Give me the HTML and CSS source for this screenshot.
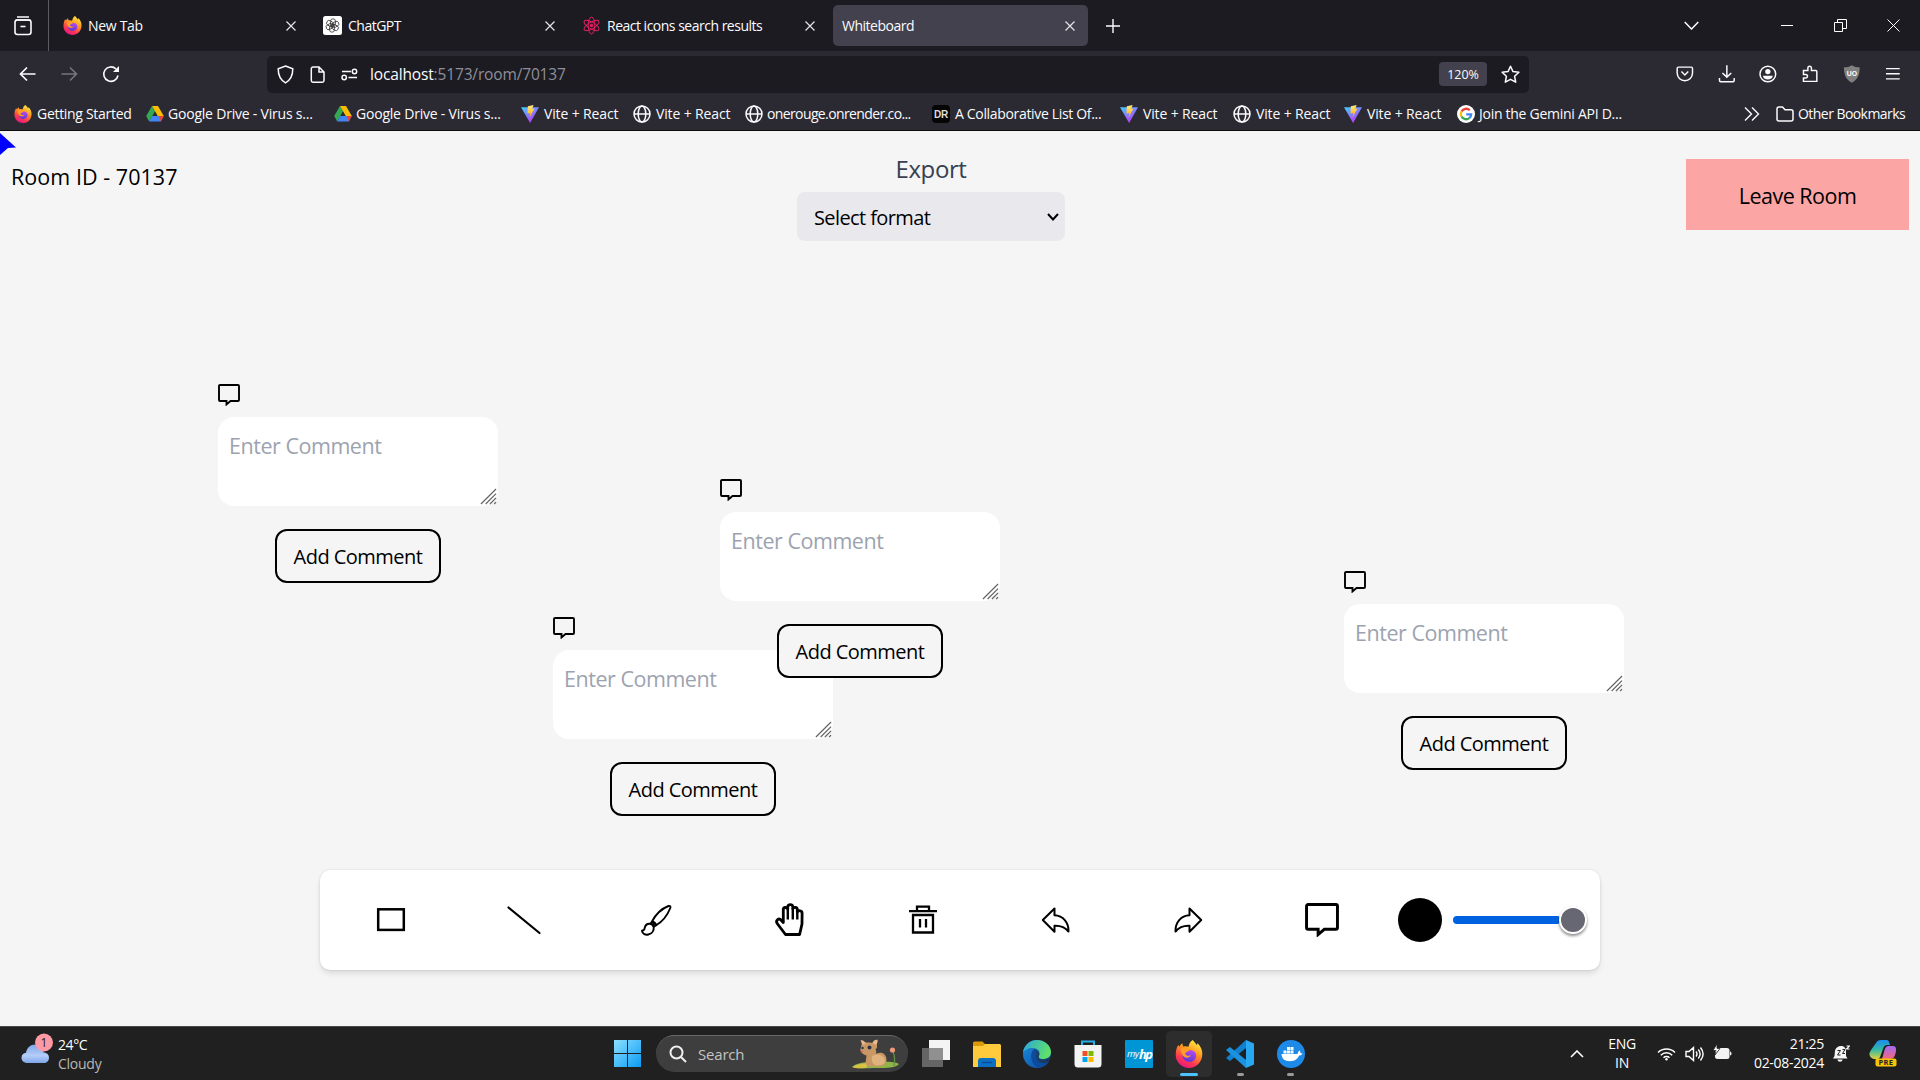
FILE: index.html
```html
<!DOCTYPE html>
<html lang="en">
<head>
<meta charset="utf-8">
<title>Whiteboard</title>
<link rel="stylesheet" href="styles.css">
</head>
<body>
<svg class="defs" aria-hidden="true">
  <defs>
    <linearGradient id="fx-body" x1=".8" y1="0" x2=".3" y2="1"><stop offset="0" stop-color="#fff14a"/><stop offset=".4" stop-color="#ff9a1f"/><stop offset=".75" stop-color="#ff3750"/><stop offset="1" stop-color="#e31587"/></linearGradient>
    <linearGradient id="fx-core" x1=".6" y1="0" x2=".3" y2="1"><stop offset="0" stop-color="#b04bf0"/><stop offset="1" stop-color="#5b35d6"/></linearGradient>
    <linearGradient id="vite-a" x1="0" y1="0" x2=".6" y2="1"><stop offset="0" stop-color="#41d1ff"/><stop offset="1" stop-color="#bd34fe"/></linearGradient>
    <linearGradient id="vite-b" x1="0" y1="0" x2="0" y2="1"><stop offset="0" stop-color="#ffea83"/><stop offset="1" stop-color="#ffa800"/></linearGradient>
    <linearGradient id="win" gradientUnits="userSpaceOnUse" x1="0" y1="0" x2="27" y2="27"><stop offset="0" stop-color="#8be0ff"/><stop offset="1" stop-color="#0a9bf5"/></linearGradient>
    <linearGradient id="cloud" x1="0" y1="0" x2="0" y2="1"><stop offset="0" stop-color="#7fa6ea"/><stop offset=".6" stop-color="#b4cdf8"/><stop offset="1" stop-color="#7ea5ea"/></linearGradient>
    <linearGradient id="edge-a" x1="0" y1="0" x2="1" y2=".3"><stop offset="0" stop-color="#2aa6e0"/><stop offset="1" stop-color="#5fe06a"/></linearGradient>
    <linearGradient id="edge-b" x1="0" y1="0" x2="1" y2="1"><stop offset="0" stop-color="#1c8fe0"/><stop offset="1" stop-color="#0c469c"/></linearGradient>
    <linearGradient id="cop-a" x1="0" y1="0" x2="0" y2="1"><stop offset="0" stop-color="#1b8df0"/><stop offset=".5" stop-color="#33b9a5"/><stop offset="1" stop-color="#e5d23a"/></linearGradient>
    <linearGradient id="cop-b" x1="0" y1="0" x2="0" y2="1"><stop offset="0" stop-color="#a26bf5"/><stop offset="1" stop-color="#f5677b"/></linearGradient>
    <symbol id="firefox" viewBox="0 0 20 20">
      <path fill="url(#fx-body)" d="M12.6 0c1 1.300 2.300 2.200 2.900 3.600.5-.4.6-.9.6-1.400C18.500 4.600 19.700 7.500 19.500 10.500 19.200 16 15 20 10 20S.5 16 .5 10.800C.5 8 1 5.600 2.300 3.500l.9 1.300C3.800 3.600 4.400 3 5.200 2.400l.6 2.200c1.500-.4 2.700-.2 3.800.3C10 2.800 11 1 12.600 0z"/>
      <path fill="url(#fx-core)" d="M6.200 8.200c2 .5 2.800-.2 4.200-.8 2.500-.5 4.900 1.200 4.700 4-.2 2.500-2.200 4.300-4.800 4.300S5.300 13.700 5.300 11.500z"/>
      <path fill="#ff9d25" d="M4.200 6c2-1 4.600-.6 6 1.400-.8 1-2.300 1-2.900 2.200.2 1.600 2.600 2 4.100 1.300-1 2.100-4.400 2.500-6-.1C4.500 9 4 7.600 4.200 6z"/>
    </symbol>
    <symbol id="drive" viewBox="0 0 18 18">
      <path fill="#34a853" d="M6 1l3 5.200L3.200 16.500.2 11z"/>
      <path fill="#fbbc04" d="M6 1h6l5.800 10h-6z"/><path fill="#4285f4" d="M6.200 11h11.600l-3 5.500H3.200z"/><path fill="#ea4335" d="M12.500 11h5.300l-3 5.500z"/>
    </symbol>
    <symbol id="vite" viewBox="0 0 19 19"><path fill="url(#vite-a)" d="M0 2.300L19 2.300 9.600 19z"/><path fill="url(#vite-b)" d="M7.200 1.200L13.300 0l-1.500 4.300 2.500-.5-5.300 9.500.8-4.800-3 .6z"/></symbol>
    <symbol id="globe" viewBox="0 0 18 18"><g fill="none" stroke="#fbfbfe" stroke-width="1.500"><circle cx="9" cy="9" r="8"/><ellipse cx="9" cy="9" rx="3.800" ry="8"/><path d="M1 9h16"/></g></symbol>
    <symbol id="close" viewBox="0 0 10 10"><path d="M.5.5l9 9M9.500.5l-9 9" fill="none" stroke="#e4e4ea" stroke-width="1.200"/></symbol>
    <symbol id="bubble" viewBox="0 0 22 22"><path d="M2 1h18a1 1 0 0 1 1 1v14a1 1 0 0 1-1 1h-7.500L8.500 20.400V17H2a1 1 0 0 1-1-1V2a1 1 0 0 1 1-1z" fill="none" stroke="#000" stroke-width="1.900"/></symbol>
    <symbol id="grip" viewBox="0 0 18 18"><path d="M1 17L17 1M6 17L17 6M10.500 17L17 10.500M15 17l2-2" fill="none" stroke="#666" stroke-width="1.300"/></symbol>
  </defs>
</svg>

<header class="browser">
  <div class="tabs">
    <div class="archive"><svg width="18" height="20" viewBox="0 0 18 20" fill="none" stroke="#fbfbfe" stroke-width="1.600"><path d="M3 1h12M1.500 4h15"/><rect x="1" y="4" width="16" height="14.500" rx="2.500"/><path d="M6.500 10.500h5"/></svg></div>
    <div class="tab"><svg class="i19"><use href="#firefox"/></svg><span>New Tab</span><svg class="x"><use href="#close"/></svg></div>
    <div class="tab"><svg class="i19" viewBox="0 0 19 19"><rect width="19" height="19" rx="2.500" fill="#fff"/><g fill="none" stroke="#333" stroke-width=".8"><rect id="petal" x="7.500" y="2.800" width="5" height="7.500" rx="2.500"/><use href="#petal" transform="rotate(60 9.500 9.500)"/><use href="#petal" transform="rotate(120 9.500 9.500)"/><use href="#petal" transform="rotate(180 9.500 9.500)"/><use href="#petal" transform="rotate(240 9.500 9.500)"/><use href="#petal" transform="rotate(300 9.500 9.500)"/></g></svg><span>ChatGPT</span><svg class="x"><use href="#close"/></svg></div>
    <div class="tab"><svg class="i19" viewBox="0 0 19 19" fill="none" stroke="#e91e63"><ellipse cx="9.500" cy="9.500" rx="8.500" ry="3.300" transform="rotate(30 9.500 9.500)"/><ellipse cx="9.500" cy="9.500" rx="8.500" ry="3.300" transform="rotate(90 9.500 9.500)"/><ellipse cx="9.500" cy="9.500" rx="8.500" ry="3.300" transform="rotate(150 9.500 9.500)"/><circle cx="9.500" cy="9.500" r="1.300" fill="#e91e63"/></svg><span>React icons search results</span><svg class="x"><use href="#close"/></svg></div>
    <div class="tab active"><span>Whiteboard</span><svg class="x"><use href="#close"/></svg></div>
    <svg class="plus" width="14" height="14" viewBox="0 0 14 14"><path d="M7 0v14M0 7h14" stroke="#fbfbfe" stroke-width="1.400"/></svg>
    <div class="window-controls">
      <svg width="15" height="9" viewBox="0 0 15 9"><path d="M.7 1L7.500 8l6.800-7" fill="none" stroke="#fbfbfe" stroke-width="1.500"/></svg>
      <svg width="12" height="12" viewBox="0 0 12 12"><path d="M0 5.500h12" stroke="#fff" stroke-width="1"/></svg>
      <svg width="13" height="13" viewBox="0 0 13 13" fill="none" stroke="#fff"><path d="M.5 3.500h8v9h-8zM3.500 3.500v-3h9v9h-4"/></svg>
      <svg width="13" height="13" viewBox="0 0 13 13"><path d="M.5.5l12 12M12.500.5l-12 12" stroke="#fff" stroke-width="1"/></svg>
    </div>
  </div>

  <div class="toolbar">
    <div class="nav">
      <svg width="17" height="16" viewBox="0 0 17 16" fill="none" stroke="#fbfbfe" stroke-width="1.700"><path d="M16.500 8H1.500M8 1.500L1.500 8 8 14.500"/></svg>
      <svg width="17" height="16" viewBox="0 0 17 16" fill="none" stroke="#77767f" stroke-width="1.600"><path d="M.5 8h15M9 1.500L15.500 8 9 14.500"/></svg>
      <svg width="18" height="18" viewBox="0 0 18 18" fill="none" stroke="#fbfbfe" stroke-width="1.600"><path d="M16 10.500A7.200 7.200 0 1 1 14 4"/><path d="M17 1v6h-6z" fill="#fbfbfe" stroke="none"/></svg>
    </div>
    <div class="url">
      <svg width="17" height="19" viewBox="0 0 17 19" fill="none" stroke="#fbfbfe" stroke-width="1.500"><path d="M8.500 1l7.300 2.800c0 6.500-1.500 11-7.300 14C2.700 14.800 1.200 10.300 1.200 3.800z"/></svg>
      <svg width="15" height="17" viewBox="0 0 15 17" fill="none" stroke="#fbfbfe" stroke-width="1.500"><path d="M3 1h6l5 5v8.500a1.700 1.700 0 0 1-1.700 1.700H3a1.700 1.700 0 0 1-1.700-1.700V2.700A1.700 1.700 0 0 1 3 1zM9 1v5h5"/></svg>
      <svg width="17" height="13" viewBox="0 0 17 13" fill="none" stroke="#fbfbfe" stroke-width="1.500"><path d="M1 3.500h9M7.500 9.500H16"/><circle cx="13.500" cy="3.500" r="2.200"/><circle cx="3.200" cy="9.500" r="2.200"/></svg>
      <span class="address">localhost<span class="dim">:5173/room/70137</span></span>
      <span class="zoom">120%</span>
      <svg width="19" height="19" viewBox="0 0 19 19" fill="none" stroke="#fbfbfe" stroke-width="1.500" stroke-linejoin="round"><path d="M9.500 1.200l2.500 5.400 5.900.7-4.300 4 1.100 5.900-5.200-2.900-5.200 2.900 1.100-5.900-4.300-4 5.900-.7z"/></svg>
    </div>
    <div class="actions">
      <svg viewBox="0 0 18 18" fill="none" stroke="#fbfbfe" stroke-width="1.500"><path d="M2.500 2h13a1.300 1.300 0 0 1 1.300 1.300V8a7.800 7.800 0 0 1-15.600 0V3.300A1.300 1.300 0 0 1 2.500 2z"/><path d="M5.500 6.500L9 10l3.500-3.500"/></svg>
      <svg viewBox="0 0 18 18" fill="none" stroke="#fbfbfe" stroke-width="1.500"><path d="M9 0v12M4.500 8L9 12.200 13.500 8M1.500 13v2a2 2 0 0 0 2 2h11a2 2 0 0 0 2-2v-2"/></svg>
      <svg viewBox="0 0 18 18"><circle cx="9" cy="9" r="8" fill="none" stroke="#fbfbfe" stroke-width="1.500"/><circle cx="9" cy="6.500" r="2.700" fill="#fbfbfe"/><path d="M4 10.800h10c0 2.400-2.300 3.700-5 3.700s-5-1.300-5-3.700z" fill="#fbfbfe"/></svg>
      <svg viewBox="0 0 18 18" fill="none" stroke="#fbfbfe" stroke-width="1.500"><path d="M2.500 5.500H7V3a1.800 1.800 0 0 1 3.600 0v2.500h4.500a1 1 0 0 1 1 1V16.500H2.500v-3.500h2.300a1.800 1.800 0 0 0 0-3.600H2.500z"/></svg>
      <svg viewBox="0 0 18 18"><path d="M9 0c2.500 1.600 5 2.200 8 2.200C17 10 15 14.800 9 18 3 14.800 1 10 1 2.200 4 2.200 6.500 1.600 9 0z" fill="#808080"/><text x="9" y="11" text-anchor="middle" class="ub">UO</text></svg>
      <svg viewBox="0 0 18 18" stroke="#fbfbfe" stroke-width="1.400"><path d="M2 3.500h14M2 8.700h14M2 14h14"/></svg>
    </div>
  </div>

  <nav class="bookmarks">
    <a class="start-link"><svg><use href="#firefox"/></svg>Getting Started</a>
    <a class="drive"><svg><use href="#drive"/></svg>Google Drive - Virus s...</a>
    <a class="drive"><svg><use href="#drive"/></svg>Google Drive - Virus s...</a>
    <a><svg><use href="#vite"/></svg>Vite + React</a>
    <a><svg><use href="#globe"/></svg>Vite + React</a>
    <a class="rouge"><svg><use href="#globe"/></svg>onerouge.onrender.co...</a>
    <a class="collab"><svg viewBox="0 0 18 18"><rect width="18" height="18" rx="4" fill="#050505"/><text x="9" y="12.800" text-anchor="middle" class="or">DR</text></svg>A Collaborative List Of...</a>
    <a><svg><use href="#vite"/></svg>Vite + React</a>
    <a><svg><use href="#globe"/></svg>Vite + React</a>
    <a><svg><use href="#vite"/></svg>Vite + React</a>
    <a class="gemini"><svg viewBox="0 0 18 18"><circle cx="9" cy="9" r="9" fill="#fff"/><g fill="none" stroke-width="2.300"><path d="M12.800 5.300A5.200 5.200 0 0 0 4.500 6.500" stroke="#ea4335"/><path d="M4.500 6.500a5.200 5.200 0 0 0 0 5" stroke="#fbbc04"/><path d="M4.500 11.500a5.200 5.200 0 0 0 7.800 1.600" stroke="#34a853"/><path d="M12.300 13.100A5 5 0 0 0 14.200 9.300H9.200" stroke="#4285f4"/></g></svg>Join the Gemini API D...</a>
    <a><svg viewBox="0 0 18 18" fill="none" stroke="#fbfbfe" stroke-width="1.400"><path d="M2 2.500L8.500 9 2 15.500M9 2.500L15.500 9 9 15.500"/></svg></a>
    <a class="other"><svg viewBox="0 0 18 18" fill="none" stroke="#fbfbfe" stroke-width="1.500"><path d="M1 4a2 2 0 0 1 2-2h3.500L9 4.700h6a2 2 0 0 1 2 2V14a2 2 0 0 1-2 2H3a2 2 0 0 1-2-2z"/></svg>Other Bookmarks</a>
  </nav>
</header>

<main class="board">
  <svg class="cursor" width="16" height="22" viewBox="0 0 16 22"><path d="M0 0l16 14.500-8 .6L0 22z" fill="#00f"/></svg>
  <div class="board-head">
    <div class="room">Room ID - 70137</div>
    <div class="export">
      <label>Export</label>
      <div class="select"><span>Select format</span><svg width="12" height="8" viewBox="0 0 12 8"><path d="M1 1l5 5.500L11 1" fill="none" stroke="#000" stroke-width="2"/></svg></div>
    </div>
    <button class="leave">Leave Room</button>
  </div>

  <section class="comment c1"><svg class="pin"><use href="#bubble"/></svg><div class="field"><span>Enter Comment</span><svg class="grip"><use href="#grip"/></svg></div><button>Add Comment</button></section>
  <section class="comment c2"><svg class="pin"><use href="#bubble"/></svg><div class="field"><span>Enter Comment</span><svg class="grip"><use href="#grip"/></svg></div><button>Add Comment</button></section>
  <section class="comment c3"><svg class="pin"><use href="#bubble"/></svg><div class="field"><span>Enter Comment</span><svg class="grip"><use href="#grip"/></svg></div><button>Add Comment</button></section>
  <section class="comment c4"><svg class="pin"><use href="#bubble"/></svg><div class="field"><span>Enter Comment</span><svg class="grip"><use href="#grip"/></svg></div><button>Add Comment</button></section>

  <div class="tools">
    <div class="tool"><svg width="34" height="34" viewBox="0 0 34 34"><rect x="4.200" y="6.300" width="25.600" height="20.600" fill="none" stroke="#000" stroke-width="2.500"/></svg></div>
    <div class="tool"><svg width="34" height="34" viewBox="0 0 34 34"><path d="M1.500 4.500L32.500 30" stroke="#000" stroke-width="2.200" stroke-linecap="round"/></svg></div>
    <div class="tool"><svg width="34" height="34" viewBox="1 0 34 34" fill="none" stroke="#000" stroke-width="1.900" stroke-linejoin="round"><path d="M13 18.500C17 11 23 5.500 29.500 3c1.700-.4 2.400.5 1.800 2C28.500 12 23.500 18.500 17.200 22.300z"/><path d="M13 18.500c2.300.3 3.700 1.700 4.200 3.800l-2.500 1.500"/><path d="M13 18.500l-1.600 2.300c2 .4 3 1.400 3.300 3"/><path d="M11.400 20.800c-3.400-.5-5.200 1.600-5.700 4.200-.2 1.700-.9 2.500-2.700 2.800.4 3.300 3.500 4.300 6.400 3.700 3.600-.8 5.700-4 5.300-7.700-.4-1.700-1.500-2.800-3.300-3z"/></svg></div>
    <div class="tool"><svg width="34" height="36" viewBox="0 1 34 36" fill="none" stroke="#000" stroke-width="2.800" stroke-linejoin="round"><path d="M12.500 33.500L4.200 22.500C2.200 19 6 16.500 8.200 19.200L10.300 21.500V8.500c0-2.600 4-2.600 4.500-.4V5.500c.4-2.600 4.600-2.600 5 0v2.300c.6-2.200 4.500-2 4.500.6v2.500c.8-1.800 5-1.700 4.800 1.500L29 23l-2.400 10.500z"/><path d="M14.800 7.500v11M19.800 7v11.500M24.300 10v8.500" stroke-width="2.400"/></svg></div>
    <div class="tool"><svg width="34" height="34" viewBox="0 .5 34 34" fill="none" stroke="#000" stroke-width="2.300"><path d="M3 8.700h28M11 8V4.200h12V8M7 12.500h20v17.500H7zM14 16.500v8.500M20 16.500v8.500"/></svg></div>
    <div class="tool"><svg width="34" height="34" viewBox="0 0 34 34" fill="none" stroke="#000" stroke-width="2" stroke-linejoin="round"><path d="M15.500 5.500v6.800c8.500.3 14.300 7 14 16.200-3.500-4.200-8.300-6-14-5.700v6L3.800 17z"/></svg></div>
    <div class="tool"><svg width="34" height="34" viewBox="1 0 34 34" fill="none" stroke="#000" stroke-width="2" stroke-linejoin="round"><path d="M18.500 5.500v6.800C10 12.600 4.200 19.300 4.500 28.500c3.500-4.200 8.300-6 14-5.700v6L30.200 17z"/></svg></div>
    <div class="tool"><svg width="34" height="34" viewBox="0 0 22 22"><use href="#bubble" width="22" height="22"/></svg></div>
    <div class="color"></div>
    <div class="slider"><div class="track"></div><div class="thumb"></div></div>
  </div>
</main>

<footer class="taskbar">
  <div class="weather">
    <svg width="34" height="34" viewBox="0 0 34 34"><path d="M6.500 30C2.500 30 .5 27.500.5 24.700c0-2.700 2-4.700 4.500-5C6 14.500 9.500 11.500 14 11.500c5 0 8 3.500 8.500 8 3.500 0 5.500 2.300 5.500 5.200 0 3-2 5.300-5.500 5.300z" fill="url(#cloud)"/><circle cx="23" cy="9.500" r="9" fill="#ff99a4"/><text x="23" y="14" text-anchor="middle" class="badge">1</text></svg>
    <div class="weather-text"><span>24°C</span><span class="muted">Cloudy</span></div>
  </div>
  <div class="apps">
    <svg class="start" width="27" height="27" viewBox="0 0 27 27"><path d="M0 0h13v13H0zM14 0h13v13H14zM0 14h13v13H0zM14 14h13v13H14z" fill="url(#win)"/></svg>
    <div class="search">
      <svg width="18" height="18" viewBox="0 0 18 18" fill="none" stroke="#f0f0f0" stroke-width="2"><circle cx="7.500" cy="7.500" r="6"/><path d="M12 12l5 5"/></svg>
      <span>Search</span>
      <svg class="critter" width="48" height="30" viewBox="0 0 48 30"><path d="M0 28c4-4 12-5 22-5s20-1 25 2c-3 4-12 4-22 4s-20 1-25-1z" fill="#8fb548"/><path d="M0 28c6-3 12-4 18-4l-4 5c-6 .5-11 .5-14-1z" fill="#d8c243"/><path d="M10 4c1-1 3-1.500 5-.5 2 0 4 0 5 .5 2-1 4-1.500 5-.5v5l-1.500 2c1 1.500 1 3 .5 4.500 5-3 10.500-.5 10.500 6 0 5-4 6.500-9 6.500H17c-3-.5-4-3-3-7l.5-4C10 15 8 13 8.500 10z" fill="#c99763"/><path d="M20 17c5-3.500 13-1 13 5 0 3.500-4 4.500-9 4.500-4-1.500-5-6-4-9.500z" fill="#dfb27e"/><path d="M8.500 1.500c2.500-.8 4.500 1 5 3.500l-3 1zM25.500.8c-2.500-.5-4.500 1-5 3.500l3.500 1.500c1.500-1.500 2-3.500 1.500-5z" fill="#e9b78c"/><circle cx="17.500" cy="8.500" r="2" fill="#26344e"/><circle cx="10.500" cy="9" r="1.200" fill="#26344e"/><path d="M8 12.500l2.500-.8v1.800z" fill="#e5484d"/><path d="M41 13c2 4 2 8 1 14" stroke="#629044" fill="none" stroke-width="1.300"/><circle cx="40.500" cy="11" r="2.600" fill="#ee9a77"/></svg>
    </div>
    <div class="app"><svg width="28" height="28" viewBox="0 0 28 28"><path d="M7 0h21v20H7z" fill="#f4f4f4"/><path d="M0 8h21v19H0z" fill="#777" fill-opacity=".8"/></svg></div>
    <div class="app"><svg width="28" height="28" viewBox="0 0 28 28"><path d="M0 3a1.500 1.500 0 0 1 1.500-1.500h8L12 4v5H0z" fill="#dc9a09"/><path d="M0 6h10l2-2h14.500A1.500 1.500 0 0 1 28 5.500V27H0z" fill="#ffcb3d"/><path d="M5 27v-6a3 3 0 0 1 3-3h12a3 3 0 0 1 3 3v6z" fill="#0b6fc4"/><path d="M9 22.500h10" stroke="#0a4d92" stroke-width="1.300"/></svg></div>
    <div class="app"><svg width="28" height="28" viewBox="0 0 28 28"><circle cx="14" cy="14" r="14" fill="url(#edge-b)"/><path d="M0 13C1 4 8 0 14 0c8 0 14 6 14 12 0 5-4 7-8 7-3 0-5-1-4-3 2-4-1-8-6-8-5 0-9 2-10 5z" fill="url(#edge-a)"/><path d="M28 15c-1.500 3-4.500 4.500-8 4.500-3 0-5-1.500-4-3.500 1-3-1-6.500-5-7-3 5-2 12 4 15.500 5 1.500 9-.5 12-4 .8-2 1-3.500 1-5.500z" fill="#202020" fill-opacity=".55"/><path d="M10 10c-3 4-3 12 4 17.500 5 .5 9-2 11.500-5.500-6 2.500-11.500 0-12.500-4.500-.5-2.500 1-5-.5-7z" fill="#0d4b9e"/></svg></div>
    <div class="app"><svg width="28" height="28" viewBox="0 0 28 28"><path d="M8 6V1.500h12V6" fill="none" stroke="#26aee8" stroke-width="2"/><path d="M.5 5h27v19a3.500 3.500 0 0 1-3.500 3.500H4A3.500 3.500 0 0 1 .5 24z" fill="#f3f3f3"/><path d="M8.500 11h5v5h-5z" fill="#f25022"/><path d="M14.500 11h5v5h-5z" fill="#7fba00"/><path d="M8.500 17h5v5h-5z" fill="#00a4ef"/><path d="M14.500 17h5v5h-5z" fill="#ffb900"/></svg></div>
    <div class="app"><svg width="28" height="28" viewBox="0 0 28 28"><rect width="28" height="28" rx="1" fill="#0096d6"/><text x="2" y="17" class="my">my</text><text x="14" y="18.500" class="hp">hp</text></svg></div>
    <div class="app current"><svg width="28" height="28"><use href="#firefox"/></svg></div>
    <div class="app running"><svg width="28" height="28" viewBox="0 0 28 28"><path d="M20 0l8 3.500v21L20 28z" fill="#29a8f2"/><path d="M20 0v8L4 21l-4-3z" fill="#1080cf"/><path d="M20 28v-8L4 7 0 10z" fill="#1b91df"/></svg></div>
    <div class="app running"><svg width="28" height="28" viewBox="0 0 28 28"><circle cx="14" cy="14" r="14" fill="#1d8ae8"/><path d="M4.500 14h16c.5-2 1-3 2-3.500.8.800 1 1.700.9 2.700l2.100.3c-.8 1.500-1.800 2-3.500 2-1.500 4-4.500 5.700-9 5.700-5 0-8.300-2-8.500-7.200z" fill="#fff"/><path d="M6.500 10.500h3v3h-3zM10 10.500h3v3h-3zM13.500 10.500h3v3h-3zM10 7h3v3h-3zM13.500 7h3v3h-3z" fill="#fff"/></svg></div>
  </div>
  <div class="tray">
    <svg class="up" width="14" height="8" viewBox="0 0 14 8"><path d="M1 7l6-6 6 6" fill="none" stroke="#fff" stroke-width="1.600"/></svg>
    <div class="lang"><span>ENG</span><span>IN</span></div>
    <svg class="wifi" width="19" height="14" viewBox="0 0 19 14" fill="none" stroke="#fff" stroke-width="1.500"><path d="M1 5.500a12 12 0 0 1 17 0M3.800 8.200a8 8 0 0 1 11.400 0M6.500 10.800a4.200 4.200 0 0 1 6 0"/><circle cx="9.500" cy="12.300" r="1.200" fill="#fff" stroke="none"/></svg>
    <svg class="sound" width="19" height="16" viewBox="0 0 19 16" fill="none" stroke="#fff" stroke-width="1.400"><path d="M1 5.500h3L8.500 1.500v13L4 10.500H1zM11 5.500c1.200 1.500 1.200 3.500 0 5M13.300 3.500c2.200 2.700 2.200 6.300 0 9M15.500 1.500c3.200 4 3.200 9 0 13"/></svg>
    <svg class="battery" width="19" height="16" viewBox="0 0 19 16"><rect x="2" y="4" width="14.500" height="11" rx="2.500" fill="#f2f2f2"/><path d="M17 7.500c2 0 2 4 0 4z" fill="#f2f2f2"/><path d="M4 0L0 6.500h3L2 11l5-6.500H4z" fill="#fff" stroke="#202020" stroke-width=".8"/></svg>
    <div class="clock"><span>21:25</span><span>02-08-2024</span></div>
    <svg class="bell" width="17" height="18" viewBox="0 0 17 18"><path d="M2 5.500C3 2.500 5 1 8 1s5 2 5 5v5l1.500 2.500H0L1.500 11z" fill="#f5f5f5"/><path d="M4.500 14.500h5c0 3-5 3-5 0z" fill="#f5f5f5"/><path d="M4.500 5.500h3l-3 4.500h3M9.500 4.500h2.500l-2.500 4h2.500" fill="none" stroke="#202020"/><path d="M13.500 1h3l-3 3h3" fill="none" stroke="#fff" stroke-width="1.100"/></svg>
    <svg class="copilot" width="28" height="28" viewBox="0 0 28 28"><path d="M7 3C8 1 9.500 0 12 0h5c3 0 3 2 4 5h-3c-2 0-3 1-4 4l-3 8c-1 3-7 3-9.500 0C-.5 14 .5 13 2 10z" fill="url(#cop-a)"/><path d="M15 12c1-4 2-6 5-6h4c4 0 3.500 5 2 9-1 3-3 4-6 4h-7z" fill="url(#cop-b)"/><rect x="6.500" y="18.500" width="21" height="8" rx="2" fill="#fbc307"/><text x="17" y="25.300" text-anchor="middle" class="pre">PRE</text></svg>
  </div>
</footer>
</body>
</html>
```
FILE: styles.css
```css
* { box-sizing: border-box; }
body {
  margin: 0;
  width: 1920px;
  height: 1080px;
  overflow: hidden;
  display: flex;
  flex-direction: column;
  font-family: "Open Sans", "Noto Sans", sans-serif;
  color: #000;
}
svg { display: block; flex: none; }
button { font-family: inherit; color: inherit; padding: 0; }
.defs { position: absolute; width: 0; height: 0; }

/* Browser chrome */
.browser { height: 131px; background: #2b2a33; color: #fbfbfe; font-size: 14px; border-bottom: 1px solid #0c0c0d; }
.tabs { display: flex; align-items: center; height: 51px; background: #1c1b22; }
.archive { width: 49px; height: 51px; padding: 16px 0 0 14px; border-right: 1px solid #5b5b66; }
.tab { display: flex; align-items: center; width: 260px; height: 41px; padding: 0 13px 0 14px; letter-spacing: -.5px; white-space: nowrap; }
.tab span { flex: 1; margin-left: 6px; }
.tab:nth-child(2) { letter-spacing: -.7px; letter-spacing: -.3px; }
.tab:nth-child(3) { width: 259px; }
.tab.active { width: 255px; margin-left: 5px; padding: 0 13px 0 3px; border-radius: 5px; background: #42414d; }
.i19 { width: 19px; height: 19px; }
.x { width: 10px; height: 10px; }
.plus { margin-left: 18px; }
.window-controls { display: flex; align-items: center; margin-left: auto; margin-right: 20px; }
.window-controls svg:nth-child(2) { margin-left: 82px; }
.window-controls svg:nth-child(3) { margin-left: 41px; }
.window-controls svg:nth-child(4) { margin-left: 40px; }

.toolbar { display: flex; align-items: center; height: 45px; }
.nav { display: flex; align-items: center; gap: 24.500px; width: 267px; padding-left: 19px; }
.url { display: flex; align-items: center; width: 1262px; height: 37px; margin-top: 1px; padding: 0 9px 0 10px; border-radius: 5px; background: #1c1b22; }
.url svg:nth-child(2) { margin-left: 16px; }
.url svg:nth-child(3) { margin-left: 16px; }
.address { flex: 1; margin-left: 12px; font-size: 15.500px; letter-spacing: -.15px; }
.dim { color: #8f8f98; }
.zoom { width: 48px; height: 24px; margin-right: 14px; border-radius: 4px; background: #42414d; font-size: 12.500px; line-height: 25px; text-align: center; letter-spacing: -.1px; }
.actions { display: flex; gap: 24px; margin-left: auto; margin-right: 18px; }
.actions svg { width: 17.700px; height: 18px; }
.ub { font: bold 7px "Liberation Sans", sans-serif; fill: #fff; }
.or { font: bold 10px "Liberation Sans", sans-serif; fill: #ddd; }

.bookmarks { display: grid; grid-template-columns: 132px 188px 187px 112px 112px 187px 188px 113px 111px 113px 286px 33px 140px; align-items: center; height: 35px; padding-left: 14px; letter-spacing: -.13px; white-space: nowrap; }
.bookmarks a { display: flex; align-items: center; gap: 5px; }
.bookmarks svg { width: 18px; height: 18px; }
.bookmarks .start-link { letter-spacing: -.3px; }
.bookmarks .drive { gap: 4px; letter-spacing: -.21px; }
.bookmarks .rouge { gap: 4px; letter-spacing: -.62px; }
.bookmarks .collab { letter-spacing: -.33px; }
.bookmarks .gemini { gap: 4px; letter-spacing: -.27px; }
.bookmarks .other { gap: 4px; letter-spacing: -.55px; }

/* Whiteboard page */
.board { position: relative; height: 895px; background: #f5f5f5; }
.cursor { position: absolute; left: 0; top: 2px; }
.board-head { display: grid; grid-template-columns: 797px 268px 1fr; padding: 0 11px 0 0; }
.room { padding: 31px 0 0 11px; font-size: 21.500px; line-height: 30px; letter-spacing: .05px; }
.export { padding-top: 20px; text-align: center; }
.export label { display: block; color: #374151; font-size: 24px; line-height: 36px; letter-spacing: -.4px; }
.select { display: flex; align-items: center; justify-content: space-between; height: 49px; margin-top: 5px; padding: 1px 6px 0 17px; border-radius: 8px; background: #e9e9ed; font-size: 20px; letter-spacing: -.6px; }
.leave { justify-self: end; width: 223px; height: 71px; margin-top: 28px; padding-top: 1px; border: 0; background: #fca5a5; font-size: 21.500px; letter-spacing: -.5px; }

.comment { position: absolute; width: 280px; }
.c1 { left: 218px; top: 253px; }
.c2 { left: 720px; top: 348px; z-index: 2; }
.c3 { left: 553px; top: 486px; z-index: 1; }
.c4 { left: 1344px; top: 440px; }
.pin { width: 22px; height: 22px; }
.field { position: relative; height: 89px; margin-top: 11px; padding: 14px 11px; border-radius: 16px; background: #fff; color: #9ca3af; font-size: 21.500px; line-height: 30px; letter-spacing: -.47px; }
.grip { position: absolute; right: 1px; bottom: 1px; width: 17px; height: 17px; }
.comment button { display: block; width: 166px; height: 54px; margin: 23px auto 0; padding-top: 1px; border: 2px solid #000; border-radius: 12px; background: #f5f5f5; font-size: 20px; letter-spacing: -.52px; }

.tools { position: absolute; left: 320px; bottom: 56px; display: flex; align-items: center; width: 1280px; height: 100px; padding-left: 5px; border-radius: 10px; background: #fff; box-shadow: 0 4px 6px -1px rgba(0, 0, 0, .12), 0 0 2px rgba(0, 0, 0, .15); }
.tool { display: flex; justify-content: center; width: 132.900px; }
.color { width: 44px; height: 44px; margin-left: 10px; border-radius: 50%; background: #000; }
.slider { display: flex; align-items: center; margin-left: 11px; }
.track { width: 108px; height: 8px; border-radius: 4px; background: #0061e0; }
.thumb { width: 28px; height: 28px; margin-left: -2px; border: 2px solid #fff; border-radius: 50%; background: #676774; box-shadow: 0 2px 3px rgba(0, 0, 0, .45); }

/* Taskbar */
.taskbar { position: relative; display: flex; height: 54px; border-top: 1px solid #454a45; background: #202020; color: #fff; font-size: 14px; line-height: 19px; }
.weather { display: flex; width: 614px; padding: 6px 0 0 21px; gap: 3px; }
.weather-text { display: flex; flex-direction: column; padding-top: 2px; letter-spacing: -.4px; }
.muted { color: #b8b8b8; letter-spacing: -.25px; }
.badge { font-size: 12px; fill: #222; }
.apps { display: flex; align-items: center; }
.search { display: flex; align-items: center; width: 252px; height: 37px; margin: 0 5px 0 15px; padding: 0 8px 0 13px; border-radius: 19px; border-top: 1px solid #686868; background: #3e3e3e; color: #c4c4c4; font-size: 15px; }
.search span { flex: 1; margin-left: 11px; letter-spacing: -.2px; }
.app { position: relative; display: flex; align-items: center; justify-content: center; width: 46px; height: 46px; margin-right: 4.700px; border-radius: 5px; }
.current { background: #2d2d2d; }
.current::after, .running::after { content: ""; position: absolute; bottom: 1px; height: 3px; border-radius: 2px; width: 7px; background: #9a9a9a; }
.current::after { width: 18px; background: #4cc2ff; }
.my { font: italic 9.500px "Open Sans", sans-serif; fill: #fff; letter-spacing: -.5px; }
.hp { font: italic bold 13px "Open Sans", sans-serif; fill: #fff; letter-spacing: -1.500px; }
.tray { display: flex; align-items: center; margin-left: auto; padding-right: 23px; letter-spacing: -.3px; }
.lang, .clock { display: flex; flex-direction: column; padding-bottom: 1px; }
.lang { width: 30px; margin: 0 20px 0 23px; text-align: center; }
.sound { margin-left: 9px; }
.battery { margin-left: 9px; margin-top: -3px; }
.clock { width: 74px; margin-left: 18px; text-align: right; align-items: flex-end; white-space: nowrap; }
.bell { margin-left: 9px; }
.copilot { margin-left: 19px; }
.pre { font: bold 7.500px "Open Sans", sans-serif; fill: #222; letter-spacing: .3px; }
```
